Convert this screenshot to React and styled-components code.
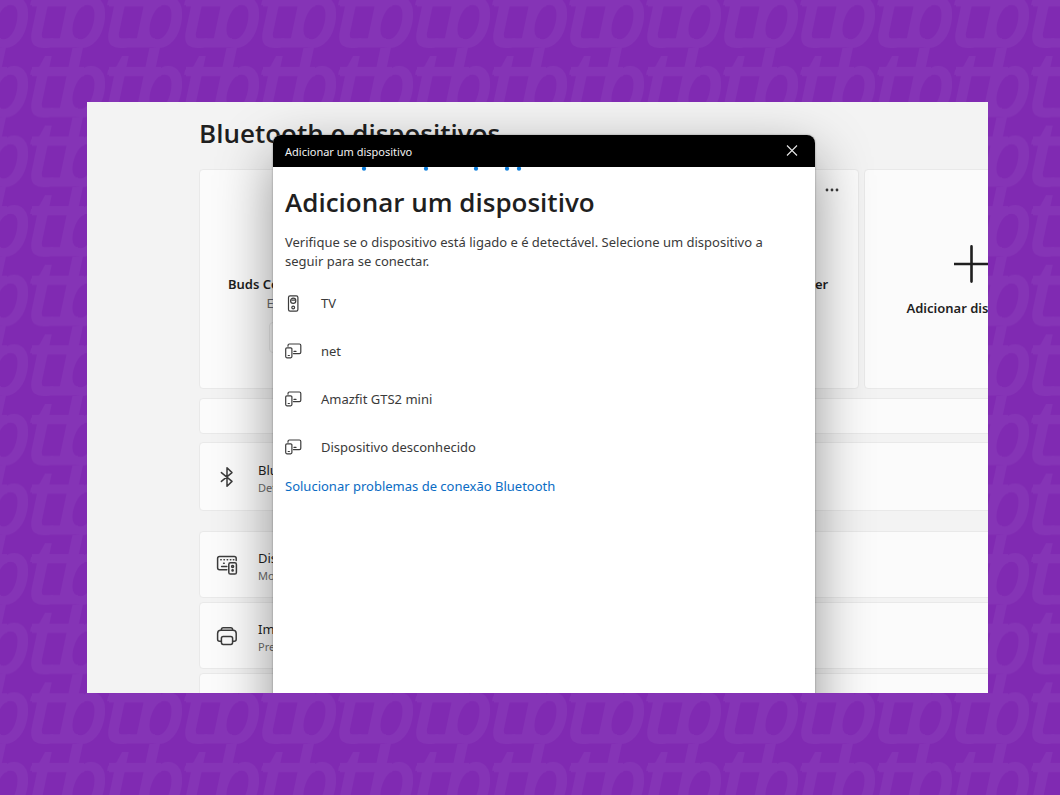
import React from "react";
import styled, { createGlobalStyle } from "styled-components";

const COLORS = {
  purple: "#802ab2",
  purpleMark: "#8534b6",
  mica: "#f3f3f3",
  card: "#fbfbfb",
  line: "#e9e9e9",
  ink: "#1f1f1f",
  muted: "#6b6b6b",
  icon: "#3c3c3c",
  link: "#0a6cc4",
  progress: "#0f7fdc",
};

const cards = [
  { name: "Buds Core", type: "Emparelhado", action: "Conectar", align: "start" },
  { name: "Keyboard", type: "", action: "", align: "center" },
  { name: "Speaker", type: "", action: "", align: "end" },
];

const devices = [
  { name: "TV", Icon: SpeakerIcon },
  { name: "net", Icon: ScreensIcon },
  { name: "Amazfit GTS2 mini", Icon: ScreensIcon },
  { name: "Dispositivo desconhecido", Icon: ScreensIcon },
];

function App() {
  return (
    <Page>
      <GlobalStyle />
      <Watermark />
      <Screen>
        <Settings>
          <Heading>Bluetooth e dispositivos</Heading>
          <CardGrid>
            {cards.map((card) => (
              <DeviceCard key={card.name} {...card} />
            ))}
            <AddCard type="button">
              <PlusIcon />
              Adicionar dispositivo
            </AddCard>
          </CardGrid>
          <MoreBar type="button" aria-label="Exibir mais dispositivos" />
          <Group>
            <SettingRow
              Icon={BluetoothIcon}
              title="Bluetooth"
              info="Detectável"
              tall
            />
          </Group>
          <Group>
            <SettingRow
              Icon={KeyboardIcon}
              title="Dispositivos"
              info="Mouse, teclado"
            />
            <SettingRow
              Icon={PrinterIcon}
              title="Impressoras"
              info="Preferências"
            />
            <SettingRow Icon={BlankIcon} title="" info="" />
          </Group>
        </Settings>
        <AddDialog />
      </Screen>
    </Page>
  );
}

function Watermark() {
  return (
    <WatermarkSvg aria-hidden="true">
      <defs>
        <pattern
          id="mark"
          x="28"
          y="48"
          width="77"
          height="69.6"
          patternUnits="userSpaceOnUse"
        >
          <text x="-2" y="69">
            t
          </text>
          <text x="28" y="69">
            b
          </text>
          {/* the bar and the foot run from one letter into the other */}
          <path d="M4 23.5H56M15 64.5H50" />
        </pattern>
      </defs>
      <rect width="100%" height="100%" fill="url(#mark)" />
    </WatermarkSvg>
  );
}

function DeviceCard({ name, type, action, align }) {
  return (
    <Card>
      <CardMenu>
        <IconButton type="button" aria-label="Mais opções">
          <DotsIcon />
        </IconButton>
      </CardMenu>
      <CardName $align={align}>{name}</CardName>
      {type && <CardType>{type}</CardType>}
      {action && <CardAction type="button">{action}</CardAction>}
    </Card>
  );
}

function SettingRow({ Icon, title, info, tall }) {
  return (
    <Row $tall={tall}>
      <Icon />
      <RowText>
        <RowTitle>{title}</RowTitle>
        <RowInfo>{info}</RowInfo>
      </RowText>
    </Row>
  );
}

function AddDialog() {
  return (
    <Dialog role="dialog" aria-labelledby="dialog-title">
      <TitleBar>
        Adicionar um dispositivo
        <IconButton type="button" aria-label="Fechar">
          <CloseIcon />
        </IconButton>
      </TitleBar>
      <Progress viewBox="0 0 542 6" aria-hidden="true">
        {[91, 153, 203, 234, 246].map((x) => (
          <circle key={x} cx={x} cy="1.7" r="2.1" />
        ))}
      </Progress>
      <DialogBody>
        <DialogTitle id="dialog-title">Adicionar um dispositivo</DialogTitle>
        <Hint>
          Verifique se o dispositivo está ligado e é detectável. Selecione um
          dispositivo a seguir para se conectar.
        </Hint>
        <DeviceList>
          {devices.map(({ name, Icon }) => (
            <li key={name}>
              <DeviceButton type="button">
                <Icon />
                {name}
              </DeviceButton>
            </li>
          ))}
        </DeviceList>
        <HelpLink href="#ajuda">
          Solucionar problemas de conexão Bluetooth
        </HelpLink>
      </DialogBody>
    </Dialog>
  );
}

function SpeakerIcon() {
  return (
    <Glyph width="18" height="18" viewBox="0 0 18 18">
      <rect x="3.5" y="1.9" width="9.4" height="15.2" rx="1.6" />
      <circle cx="8.2" cy="6.7" r="2.6" />
      <path d="M6.8 6.1h2.8" />
      <circle cx="8.2" cy="13.5" r="1.4" />
    </Glyph>
  );
}

function ScreensIcon() {
  return (
    <Glyph width="18" height="18" viewBox="0 0 18 18">
      <path d="M3 4.2V3.4Q3 2 4.4 2H14.4Q15.8 2 15.8 3.4V10.2Q15.8 11.6 14.4 11.6H8.4" />
      <rect x="0.7" y="5.9" width="6.2" height="9.9" rx="1.2" />
      <path d="M3.2 13.5h1.2M9 9.4h2" />
    </Glyph>
  );
}

function BluetoothIcon() {
  return (
    <Glyph width="24" height="24" viewBox="0 0 24 24" $bold>
      <path d="M6.4 7.6 17 16.4 12 21.2V2.8L17 7.6 6.4 16.4" />
    </Glyph>
  );
}

function KeyboardIcon() {
  return (
    <Glyph width="24" height="24" viewBox="0 0 24 24" $bold>
      <path d="M11.8 16.8H4.6Q2.6 16.8 2.6 14.8V5.4Q2.6 3.4 4.6 3.4H19.2Q21.2 3.4 21.2 5.4V7.6" />
      <path d="M5.8 6.8h.4M9 6.8h.4M12.2 6.8h.4M15.4 6.8h.4M18.4 6.8h.4M8.6 10.2h.6M6.6 13.4h5.2" />
      <rect x="13.8" y="9.8" width="7.6" height="11.2" rx="1.6" />
      <circle cx="17.6" cy="13.4" r="1" />
      <circle cx="17.6" cy="17.4" r="0.6" />
    </Glyph>
  );
}

function PrinterIcon() {
  return (
    <Glyph width="24" height="24" viewBox="0 0 24 24" $bold>
      <path d="M6.4 6.2V5.6Q6.4 3.8 8.2 3.8H15.8Q17.6 3.8 17.6 5.6V6.2" />
      <path d="M6.4 17.2H4.6Q2.6 17.2 2.6 15.2V9.4Q2.6 6.2 5.8 6.2H18Q21.2 6.2 21.2 9.4V15.2Q21.2 17.2 19.2 17.2H17.6" />
      <rect x="6.4" y="12.6" width="11.2" height="7.8" rx="1.8" />
    </Glyph>
  );
}

function BlankIcon() {
  return <Glyph width="24" height="24" viewBox="0 0 24 24" />;
}

function PlusIcon() {
  return (
    <svg width="38" height="38" viewBox="0 0 38 38" aria-hidden="true">
      <path
        d="M17.5 1.4v35.2M.4 19h35.2"
        stroke={COLORS.ink}
        strokeWidth="2.6"
        strokeLinecap="round"
      />
    </svg>
  );
}

function DotsIcon() {
  return (
    <svg width="14" height="4" viewBox="0 0 14 4" fill={COLORS.icon}>
      <circle cx="2" cy="2" r="1.4" />
      <circle cx="7" cy="2" r="1.4" />
      <circle cx="12" cy="2" r="1.4" />
    </svg>
  );
}

function CloseIcon() {
  return (
    <svg width="12" height="12" viewBox="0 0 12 12" stroke="#e6e6e6">
      <path d="m1 .5 10 10M11 .5 1 10.5" strokeWidth="1.1" />
    </svg>
  );
}

const GlobalStyle = createGlobalStyle`
  *, *::before, *::after {
    box-sizing: border-box;
  }
  body {
    margin: 0;
    font-family: "Noto Sans", "Segoe UI", sans-serif;
    font-size: 13px;
    line-height: 19px;
    color: ${COLORS.ink};
  }
  button {
    font: inherit;
    color: inherit;
    padding: 0;
    border: none;
    background: none;
  }
  h1, h2, p, ul {
    margin: 0;
    padding: 0;
  }
`;

const Page = styled.div`
  position: relative;
  display: flex;
  min-height: 100vh;
  padding: 102px 72px 102px 87px;
  background: ${COLORS.purple};
`;
const WatermarkSvg = styled.svg`
  /**sits behind the whole page */
  position: absolute;
  inset: 0;
  width: 100%;
  height: 100%;

  text {
    font: italic 600 91px "Open Sans", sans-serif;
    fill: ${COLORS.purpleMark};
  }
  path {
    stroke: ${COLORS.purpleMark};
    stroke-width: 9;
  }
`;
const Screen = styled.main`
  position: relative;
  flex: 1;
  min-width: 0;
  height: calc(100vh - 204px);
  overflow: hidden;
  background: ${COLORS.mica};
`;
const Settings = styled.div`
  /**the content keeps going past the right edge */
  margin-right: -93px;
  padding: 13px 0 0 112px;
`;
const Heading = styled.h1`
  font-family: "Open Sans", sans-serif;
  font-size: 26px;
  font-weight: 600;
  line-height: 36px;
  margin-bottom: 18px;
`;
const CardGrid = styled.div`
  display: grid;
  grid-template-columns: repeat(4, 1fr);
  gap: 5px;
`;
const Card = styled.article`
  height: 220px;
  display: flex;
  flex-direction: column;
  align-items: center;
  background: ${COLORS.card};
  border: 1px solid ${COLORS.line};
  border-radius: 4px;
`;
const AddCard = styled(Card).attrs({ as: "button" })`
  && {
    padding-top: 75px;
    gap: 16px;
    font-weight: 600;
    background: ${COLORS.card};
    border: 1px solid ${COLORS.line};
  }
`;
const CardMenu = styled.div`
  align-self: stretch;
  display: flex;
  justify-content: flex-end;
  height: 105px;
  padding: 10px 19px 0 0;
`;
const IconButton = styled.button`
  display: grid;
  place-items: center;
  height: 20px;
`;
const CardName = styled.h2`
  align-self: stretch;
  padding: 0 30px 0 28px;
  font-size: 13px;
  font-weight: 600;
  text-align: ${(p) => p.$align};
`;
const CardType = styled.p`
  font-size: 13px;
  color: ${COLORS.muted};
`;
const CardAction = styled.button`
  width: 77px;
  height: 31px;
  margin-top: 9px;

  && {
    border: 1px solid ${COLORS.line};
    border-radius: 4px;
  }
`;
const MoreBar = styled.button`
  display: block;
  width: 100%;
  height: 36px;
  margin: 9px 0 8px;

  && {
    background: ${COLORS.card};
    border: 1px solid ${COLORS.line};
    border-radius: 4px;
  }
`;
const Group = styled.section`
  display: flex;
  flex-direction: column;
  gap: 4px;
  margin-bottom: 20px;
`;
const Row = styled.div`
  display: flex;
  align-items: center;
  gap: 19px;
  height: ${(p) => (p.$tall ? "69px" : "67px")};
  padding: 0 15px;
  background: ${COLORS.card};
  border: 1px solid ${COLORS.line};
  border-radius: 4px;
`;
const RowText = styled.div`
  padding-top: 3px;
`;
const RowTitle = styled.div`
  line-height: 19px;
`;
const RowInfo = styled.div`
  font-size: 11px;
  line-height: 15px;
  color: ${COLORS.muted};
`;
const Dialog = styled.section`
  /**floats over the settings and runs off the bottom */
  position: absolute;
  top: 33px;
  bottom: -80px;
  left: 186px;
  right: 173px;
  overflow: hidden;
  background: white;
  border-radius: 8px 8px 0 0;
  box-shadow:
    0 0 2px rgba(0, 0, 0, 0.4),
    0 20px 56px rgba(0, 0, 0, 0.42);
`;
const TitleBar = styled.header`
  display: flex;
  justify-content: space-between;
  align-items: center;
  height: 32px;
  padding: 0 17px 0 12px;
  font-size: 11px;
  color: #f2f2f2;
  background: black;
`;
const Progress = styled.svg`
  display: block;
  width: 100%;
  height: 6px;
  fill: ${COLORS.progress};
`;
const DialogBody = styled.div`
  padding: 11px 12px;
`;
const DialogTitle = styled.h2`
  font-family: "Open Sans", sans-serif;
  font-size: 26px;
  font-weight: 600;
  line-height: 36px;
  margin-bottom: 13px;
`;
const Hint = styled.p`
  max-width: 488px;
  margin-bottom: 8px;
  color: #3a3a3a;
`;
const DeviceList = styled.ul`
  list-style: none;
  margin-bottom: 6px;
`;
const DeviceButton = styled.button`
  display: flex;
  align-items: center;
  gap: 18px;
  width: 100%;
  height: 48px;
  color: #3a3a3a;
`;
const HelpLink = styled.a`
  color: ${COLORS.link};
  text-decoration: none;
`;
const Glyph = styled.svg.attrs({ "aria-hidden": true })`
  flex: none;
  fill: none;
  stroke: ${COLORS.icon};
  stroke-width: ${(p) => (p.$bold ? 1.5 : 1.2)};
  stroke-linecap: round;
  stroke-linejoin: round;
`;

export default App;
